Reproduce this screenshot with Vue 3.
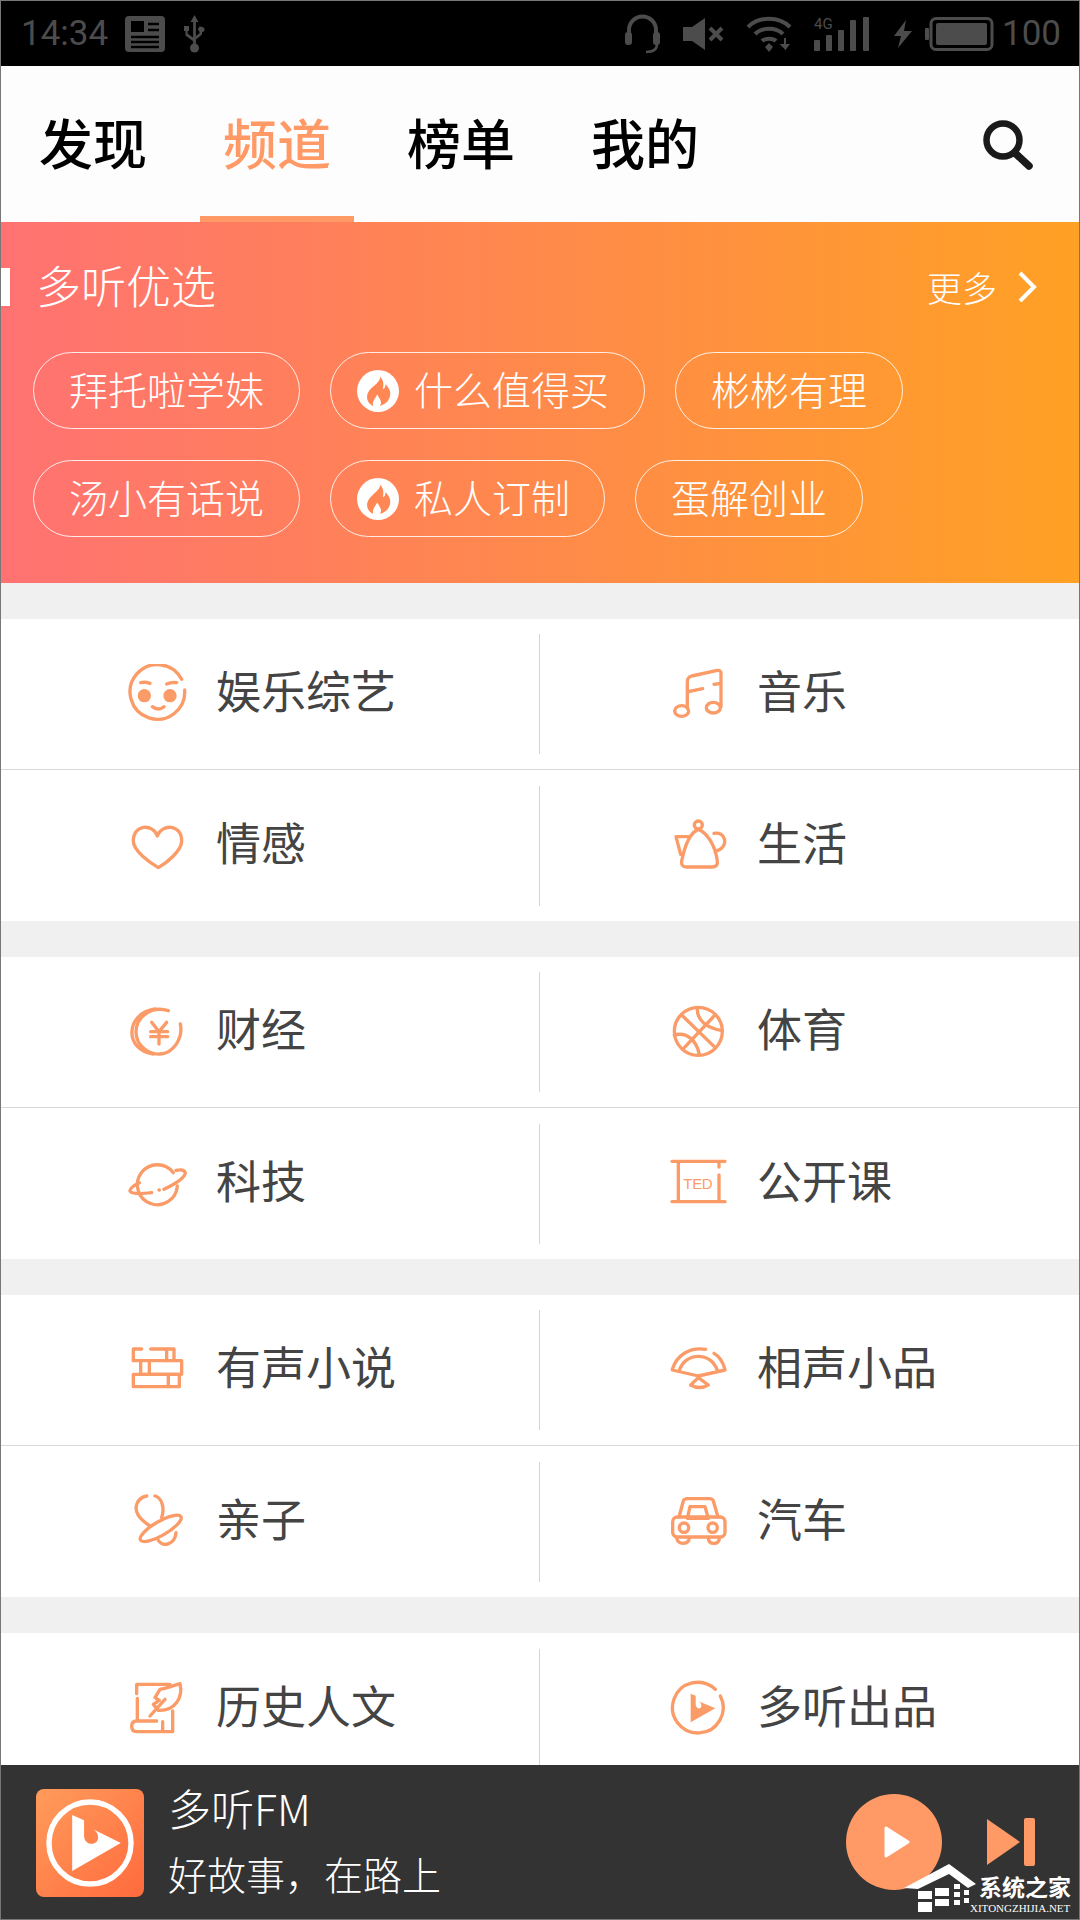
<script setup>
const tabs = [
  { name: "发现" },
  { name: "频道", active: true },
  { name: "榜单" },
  { name: "我的" },
];

const chipRows = [
  [
    { name: "拜托啦学妹" },
    { name: "什么值得买", hot: true, wide: true },
    { name: "彬彬有理" },
  ],
  [
    { name: "汤小有话说" },
    { name: "私人订制", hot: true },
    { name: "蛋解创业" },
  ],
];

const sections = [
  [
    [
      { name: "娱乐综艺", icon: "face", box: "81 72 180 180" },
      { name: "音乐", icon: "note", box: "84 72 180 180" },
    ],
    [
      { name: "情感", icon: "heart", box: "81 525 180 180" },
      { name: "生活", icon: "pot", box: "84 525 180 180" },
    ],
  ],
  [
    [
      { name: "财经", icon: "coin", box: "81 36 180 180" },
      { name: "体育", icon: "ball", box: "84 36 180 180" },
    ],
    [
      { name: "科技", icon: "planet", box: "81 489 180 180" },
      { name: "公开课", icon: "ted", box: "84 489 180 180" },
    ],
  ],
  [
    [
      { name: "有声小说", icon: "books", box: "81 30 180 180" },
      { name: "相声小品", icon: "fan", box: "84 30 180 180" },
    ],
    [
      { name: "亲子", icon: "pacifier", box: "81 483 180 180" },
      { name: "汽车", icon: "car", box: "84 483 180 180" },
    ],
  ],
  [
    [
      { name: "历史人文", icon: "scroll", box: "81 54 180 180" },
      { name: "多听出品", icon: "logo", box: "84 54 180 180" },
    ],
  ],
];
</script>

<template>
  <div class="phone">
    <div class="status">
      <div class="status-group left">
        <span class="clock">14:34</span>
        <svg width="40" height="36" viewBox="0 0 40 36">
          <rect width="40" height="36" rx="4" fill="#4c4c4c" />
          <rect x="6" y="5" width="13" height="11" fill="#000" />
          <path d="M23 8h11M23 14h11M6 21h28M6 26h28M6 31h28" stroke="#000" stroke-width="2.400" />
        </svg>
        <svg width="25" height="38" viewBox="0 0 25 38" fill="#4c4c4c">
          <path d="M12.500 0l4 7h-2.600v23h-2.800V7H8.500z" />
          <circle cx="12.500" cy="33" r="4.500" />
          <path d="M2 11h5v5H5.600v2.500l5.900 4.500v3.400l-8-6V16H2zM20 12a2.500 2.500 0 1 1 0 5v2.500l-6 5v-3.400l3.500-2.800V16.500A2.500 2.500 0 0 1 20 12z" />
        </svg>
      </div>
      <div class="status-group right">
        <svg width="37" height="40" viewBox="0 0 37 40" fill="none" stroke="#4c4c4c">
          <path d="M5 22V16a13.500 13.500 0 0 1 27 0v6" stroke-width="4" />
          <rect x="1" y="18" width="7" height="13" rx="3" fill="#4c4c4c" stroke="none" />
          <rect x="29" y="18" width="7" height="13" rx="3" fill="#4c4c4c" stroke="none" />
          <path d="M33 30c0 5-4 8-11 8" stroke-width="2.500" />
        </svg>
        <svg width="41" height="32" viewBox="0 0 41 32" fill="#4c4c4c">
          <path d="M0 9h9L22 0v32L9 23H0z" />
          <path d="M27 10l12 12M39 10L27 22" stroke="#4c4c4c" stroke-width="4" />
        </svg>
        <svg width="46" height="36" viewBox="0 0 46 36" fill="none" stroke="#4c4c4c" stroke-width="4">
          <path d="M2 11c11-11 31-11 42 0M9 18c7-7 21-7 28 0M16 25c3-3 11-3 14 0" />
          <path d="M23 27l4 4-4 5-4-5z" fill="#4c4c4c" stroke="none" />
          <path d="M39 22v10l-3-3h6l-3 4" stroke-width="2" />
        </svg>
        <svg width="56" height="42" viewBox="0 -4 56 42" fill="#4c4c4c">
          <text x="0" y="12" class="net">4G</text>
          <rect x="0" y="23" width="6" height="11" rx="1" />
          <rect x="12" y="18" width="6" height="16" rx="1" />
          <rect x="24" y="13" width="6" height="21" rx="1" />
          <rect x="36" y="3" width="6" height="31" rx="1" />
          <rect x="49" y="0" width="6" height="34" rx="1" />
        </svg>
        <svg width="21" height="28" viewBox="0 0 21 28" fill="#4c4c4c">
          <path d="M14 0L2 16h7L6 28l14-17h-8z" />
        </svg>
        <svg class="battery" width="69" height="34" viewBox="0 0 69 34">
          <rect x="0" y="11" width="4" height="12" rx="1" fill="#4c4c4c" />
          <rect x="6" y="1.500" width="61" height="31" rx="5" fill="none" stroke="#4c4c4c" stroke-width="3" />
          <rect x="11" y="6" width="51" height="22" rx="2" fill="#4c4c4c" />
        </svg>
        <span class="clock level">100</span>
      </div>
    </div>

    <header class="top">
      <nav class="tabs">
        <span
          v-for="tab in tabs"
          :key="tab.name"
          class="tab"
          :class="tab.active && 'active'"
        >{{ tab.name }}</span>
      </nav>
      <svg class="search" width="52" height="50" viewBox="0 0 52 50" fill="none" stroke="#1a1a1a">
        <circle cx="21" cy="20" r="16.500" stroke-width="6.500" />
        <path d="M33 33l14 13" stroke-width="7.500" stroke-linecap="round" />
      </svg>
    </header>

    <section class="picks">
      <div class="picks-head">
        <h2 class="picks-title">多听优选</h2>
        <div class="more">
          更多
          <svg width="20" height="32" viewBox="0 0 20 32" fill="none" stroke="#fff" stroke-width="4">
            <path d="M3 2l14 14L3 30" />
          </svg>
        </div>
      </div>
      <div v-for="(row, i) in chipRows" :key="i" class="chip-row">
        <span
          v-for="chip in row"
          :key="chip.name"
          class="chip"
          :class="[chip.hot && 'hot', chip.wide && 'wide']"
        >
          <svg v-if="chip.hot" class="flame" width="42" height="42" viewBox="0 0 124 124">
            <circle cx="62" cy="62" r="62" fill="#fff" />
            <path
              d="M68 20C70 40 35 50 30 75C28 92 38 102 48 106C44 95 52 85 60 72C66 85 76 92 68 106C88 100 100 85 98 65C96 55 90 48 84 42C84 52 80 56 76 56C80 42 78 30 68 20Z"
              fill="#ff8754"
            />
          </svg>
          {{ chip.name }}
        </span>
      </div>
    </section>

    <main class="list">
      <div v-for="(section, s) in sections" :key="s" class="section">
        <div v-for="(row, r) in section" :key="r" class="row">
          <div v-for="item in row" :key="item.name" class="cell">
            <svg class="icon" width="60" height="60" :viewBox="item.box">
              <template v-if="item.icon === 'face'">
                <path d="M245 118A82 82 0 1 0 254 150" />
                <path d="M122 128q14-3 28 2M200 132q14-6 30-4M157 200q18 14 35 0" />
                <circle class="solid" cx="133" cy="167" r="20" />
                <circle class="solid" cx="210" cy="167" r="20" />
              </template>
              <template v-else-if="item.icon === 'note'">
                <path d="M142 205V125Q142 112 155 108L232 91Q243 90 243 100V200M145 155L188 146M222 133L243 130" />
                <ellipse cx="125" cy="213" rx="21" ry="16" />
                <ellipse cx="220" cy="203" rx="21" ry="16" />
              </template>
              <template v-else-if="item.icon === 'heart'">
                <path d="M172 585C160 548 100 548 100 600C100 630 150 665 175 680C200 665 245 630 245 600C245 548 185 548 172 585" />
              </template>
              <template v-else-if="item.icon === 'pot'">
                <circle cx="175" cy="552" r="12" />
                <path d="M175 565C150 575 135 610 125 660Q122 678 140 678H215Q235 678 232 660C225 610 200 575 175 565Z" />
                <path d="M145 587H108L122 640M222 577C250 572 262 600 248 618Q240 628 228 630" />
              </template>
              <template v-else-if="item.icon === 'coin'">
                <path d="M205 62C150 45 108 85 108 125C108 170 150 194 180 192C220 190 250 145 241 102" />
                <path d="M165 57C75 70 72 180 160 192" />
                <path d="M155 97L177 125L200 97M152 125H203M152 140H203M177 125V162" />
              </template>
              <template v-else-if="item.icon === 'ball'">
                <circle cx="175" cy="124" r="72" />
                <path d="M125 75L225 172M225 75L128 178M172 55C170 90 200 115 247 122M103 135C140 125 170 150 178 194" />
              </template>
              <template v-else-if="item.icon === 'planet'">
                <path d="M220 545A60 60 0 1 0 232 585" />
                <path d="M118 575Q88 590 90 600Q95 612 155 605M192 595Q255 565 256 545Q252 533 228 538" />
                <path d="M177 597h1" />
              </template>
              <template v-else-if="item.icon === 'ted'">
                <path d="M96 511H255M96 632H255M115 511V632M237 511V528M237 552V632" />
                <text class="ted" x="130" y="593" textLength="88">TED</text>
              </template>
              <template v-else-if="item.icon === 'books'">
                <path d="M125 57H100V92M152 57H222V92M200 57V92" />
                <rect x="122" y="92" width="123" height="41" />
                <path d="M148 92V133" />
                <rect x="100" y="133" width="138" height="37" />
                <path d="M205 133V170M100 92H122" />
              </template>
              <template v-else-if="item.icon === 'fan'">
                <path d="M97 118C110 75 150 50 197 58M222 70C240 80 250 100 255 118M118 122C135 65 215 65 232 122M97 120L175 138L255 120" />
                <path d="M175 143L152 165Q178 180 205 165Z" />
              </template>
              <template v-else-if="item.icon === 'pacifier'">
                <path d="M140 495C112 500 100 530 115 553Q125 568 150 585M165 495C185 500 195 530 185 560" />
                <ellipse cx="182" cy="592" rx="70" ry="21" transform="rotate(-30 182 592)" />
                <path d="M175 628C190 650 225 640 228 605" />
              </template>
              <template v-else-if="item.icon === 'car'">
                <path d="M117 558L130 510Q132 503 142 503H208Q218 503 220 510L234 558" />
                <path d="M150 527H195L205 562H142Z" />
                <rect x="98" y="558" width="157" height="60" rx="14" />
                <circle cx="132" cy="590" r="14" />
                <circle cx="218" cy="590" r="14" />
                <path d="M110 620Q112 637 130 637Q147 637 148 620M205 620Q205 637 222 637Q238 637 238 620" />
              </template>
              <template v-else-if="item.icon === 'scroll'">
                <path d="M110 98V70H210M112 112V180M170 180H110Q95 180 95 196Q95 212 110 212H218V150M188 182V212" />
                <path d="M240 68C250 110 225 150 175 148L160 130L178 118L165 110L180 85Q205 80 240 68ZM150 165L195 115" />
              </template>
              <template v-else-if="item.icon === 'logo'">
                <path d="M226 85A76 76 0 1 0 241 105" />
                <path
                  class="solid"
                  d="M152 98L167 104V130C167 145 184 146 184 134C184 128 181 124 176 121L226 142L152 184Z"
                />
              </template>
            </svg>
            <span class="cell-name">{{ item.name }}</span>
          </div>
        </div>
      </div>
    </main>

    <footer class="player">
      <div class="cover">
        <svg width="108" height="108" viewBox="75 42 200 200">
          <circle cx="175" cy="142" r="76" fill="none" stroke="#fff" stroke-width="10" />
          <path
            d="M142 90L164 100V128C164 148 190 148 190 132C190 124 185 118 178 115L232 142L142 194Z"
            fill="#fff"
          />
        </svg>
      </div>
      <div class="track">
        <div class="track-name">多听FM</div>
        <div class="track-desc">好故事，在路上</div>
      </div>
      <div class="controls">
        <button class="play">
          <svg width="26" height="32" viewBox="0 0 26 32">
            <path d="M2 2L24 16L2 30Z" fill="#fff" stroke="#fff" stroke-width="3" stroke-linejoin="round" />
          </svg>
        </button>
        <svg width="48" height="48" viewBox="0 0 48 48" fill="#ff9a66">
          <path d="M0 1L33 24L0 47Z" />
          <rect x="37" y="0" width="11" height="48" rx="2" />
        </svg>
      </div>
    </footer>

    <div class="mark">
      <svg width="72" height="48" viewBox="0 0 72 48" fill="#fff">
        <path d="M45 0L72 20L64 24L45 10L14 25L0 24Z" />
        <path d="M14 27h14v8H14zM31 24h14v8H31zM14 38h14v10H14zM31 35h14v7H31z" />
        <path d="M50 20h6v5h-6zM50 28h6v5h-6zM60 26h5v5h-5zM60 34h5v5h-5zM50 36h6v5h-6z" />
      </svg>
      <div class="mark-text">
        <div class="mark-name">系统之家</div>
        <div class="mark-site">XITONGZHIJIA.NET</div>
      </div>
    </div>
  </div>
</template>

<style scoped>
.phone {
  position: relative;
  width: 1080px;
  height: 1920px;
  box-sizing: border-box;
  border: 1px solid #777;
  display: flex;
  flex-direction: column;
  overflow: hidden;
  background: #f0f0f0;
  font-family: "Noto Sans CJK SC", "Noto Sans", sans-serif;
}
.status {
  height: 65px;
  flex: none;
  background: #000;
  display: flex;
  justify-content: space-between;
  align-items: center;
  padding: 0 18px 0 20px;
}
.status-group {
  display: flex;
  align-items: center;
}
.status-group.left {
  gap: 17px;
}
.status-group.right {
  gap: 22px;
}
.clock {
  font-family: Roboto, sans-serif;
  font-size: 35px;
  color: #4c4c4c;
}
.net {
  font-family: Roboto, sans-serif;
  font-size: 15px;
}
.battery {
  margin-left: -10px;
}
.level {
  margin-left: -14px;
}
.top {
  height: 156px;
  flex: none;
  background: #fdfdfd;
  display: flex;
  justify-content: space-between;
  align-items: center;
  padding: 0 45px 0 15px;
}
.tabs {
  display: flex;
  gap: 30px;
  height: 100%;
}
.tab {
  width: 154px;
  box-sizing: border-box;
  display: flex;
  justify-content: center;
  align-items: center;
  font-size: 54px;
  font-weight: 500;
  color: #000;
  border-bottom: 6px solid transparent;
}
.tab.active {
  color: #ff9a66;
  border-bottom-color: #ff9a66;
}
.search {
  margin-top: 2px;
}
.picks {
  height: 361px;
  flex: none;
  box-sizing: border-box;
  background: linear-gradient(90deg, #ff7272, #ffa124);
  color: #fff;
  padding-top: 36px;
  font-weight: 300;
}
.picks-head {
  height: 58px;
  display: flex;
  justify-content: space-between;
  align-items: center;
  padding: 0 42px 0 0;
  margin-bottom: 36px;
}
.picks-title {
  margin: 0;
  font-size: 45px;
  font-weight: 300;
  line-height: 34px;
  padding: 0 0 4px 26px;
  border-left: 9px solid #fff;
}
.more {
  display: flex;
  align-items: center;
  gap: 20px;
  font-size: 35px;
  padding-bottom: 2px;
}
.more svg {
  margin-top: 2px;
}
.chip-row {
  display: flex;
  gap: 30px;
  padding-left: 32px;
  margin-bottom: 31px;
}
.chip {
  height: 77px;
  box-sizing: border-box;
  border: 1px solid rgba(255, 255, 255, 0.85);
  border-radius: 39px;
  padding: 0 35px 5px;
  display: flex;
  align-items: center;
  font-size: 39px;
  white-space: nowrap;
}
.chip.hot {
  padding: 0 34px 5px 26px;
}
.chip.wide {
  padding-right: 35px;
}
.flame {
  margin: 5px 15px 0 0;
}
.list {
  flex: 1;
  min-height: 0;
  overflow: hidden;
}
.section {
  margin-top: 36px;
  background: #fff;
}
.row {
  height: 151px;
  box-sizing: border-box;
  display: flex;
  align-items: center;
}
.row:not(:last-child) {
  border-bottom: 1px solid #d8d8d8;
}
.cell {
  flex: none;
  height: 120px;
  box-sizing: border-box;
  display: flex;
  align-items: center;
  gap: 30px;
  font-size: 45px;
  color: #444;
}
.cell:first-child {
  width: 539px;
  padding-left: 126px;
  border-right: 1px solid #d4d4d4;
}
.cell:last-child {
  padding-left: 128px;
}
.cell-name {
  margin-bottom: 9px;
  margin-left: -1px;
}
.icon {
  flex: none;
  fill: none;
  stroke: #fb9b68;
  stroke-width: 10;
  stroke-linecap: round;
  stroke-linejoin: round;
}
.solid {
  fill: #fb9b68;
  stroke: none;
}
.ted {
  fill: #fb9b68;
  stroke: none;
  font-family: "Liberation Sans", sans-serif;
  font-size: 45px;
}
.player {
  height: 154px;
  flex: none;
  background: #333;
  display: flex;
  align-items: center;
  color: #fff;
  padding-left: 35px;
  font-weight: 300;
}
.cover {
  width: 108px;
  height: 108px;
  border-radius: 8px;
  background: linear-gradient(135deg, #ff9c5c, #ff6a3c);
  margin-top: 1px;
  flex: none;
}
.cover svg {
  display: block;
}
.track {
  margin-left: 24px;
  flex: 1;
  padding-bottom: 5px;
}
.track-name {
  font-size: 43px;
  line-height: 56px;
  margin-bottom: 10px;
}
.track-desc {
  font-size: 39px;
  line-height: 56px;
}
.controls {
  display: flex;
  align-items: center;
  gap: 45px;
  padding-right: 44px;
}
.play {
  width: 96px;
  height: 96px;
  border: 0;
  padding: 0 0 0 6px;
  border-radius: 50%;
  background: #ff9a66;
  display: flex;
  justify-content: center;
  align-items: center;
}
.mark {
  position: absolute;
  right: 8px;
  bottom: 4px;
  display: flex;
  align-items: flex-start;
  color: #fff;
}
.mark-text {
  margin-left: -6px;
}
.mark-name {
  font-size: 23px;
  font-weight: 700;
  line-height: 26px;
  margin-top: 9px;
  padding-left: 9px;
}
.mark-site {
  font-family: "Liberation Serif", serif;
  font-size: 11px;
  line-height: 14px;
  margin-top: 2px;
}
</style>
